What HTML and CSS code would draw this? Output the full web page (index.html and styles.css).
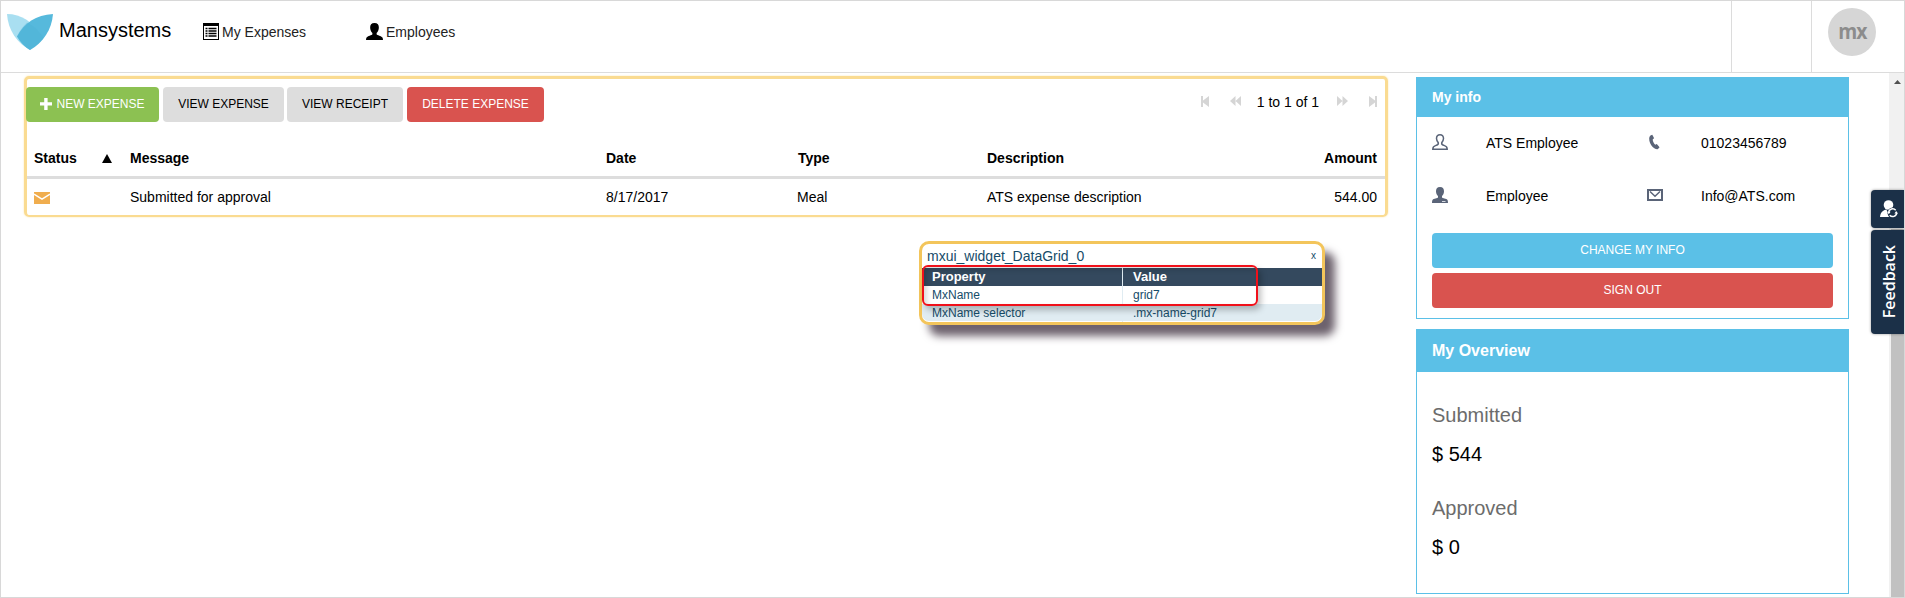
FILE: index.html
```html
<!DOCTYPE html>
<html lang="en">
<head>
<meta charset="utf-8">
<title>Mansystems</title>
<link rel="stylesheet" href="styles.css">
</head>
<body>
<div class="app">
  <header class="topbar">
    <svg class="logo" viewBox="0 0 46 36">
      <path fill="#a9dff1" d="M0 0C14 0 26 8 33 20L23 36C10 29 1 16 0 0z"/>
      <path fill="#56b9dc" d="M46 0C29 1 17 9 10 22.500C13 28 18 33 23 36C36 29 45 15 46 0z"/>
      <path fill="#49aed3" d="M20 8.500C27 12 33 18 36.500 24C32 30 28 33 23 36C18 33 13 28 10 22.500C12.500 17 16 12 20 8.500z" opacity=".3"/>
    </svg>
    <span class="brand">Mansystems</span>
    <a class="nav nav-expenses"><svg width="16" height="17" viewBox="0 0 16 17"><path fill="#000" fill-rule="evenodd" d="M0 0h16v17H0zM1 3v13h14V3z"/><path stroke="#000" stroke-width="1.500" d="M2.500 5.500h2M5.500 5.500h8M2.500 8h2M5.500 8h8M2.500 10.500h2M5.500 10.500h8M2.500 13h2M5.500 13h8"/></svg>My Expenses</a>
    <a class="nav"><svg width="17" height="17" viewBox="0 0 16 16" preserveAspectRatio="none"><path fill="#000" d="M8 0C5 0 3.800 1.800 3.900 4.500C4 6.500 4.800 8.300 6 9.300V10.600C5.600 11.600 1.500 12.300.700 13.500C.2 14.200 0 15 0 16H16C16 15 15.800 14.200 15.300 13.500C14.500 12.300 10.400 11.600 10 10.600V9.300C11.200 8.300 12 6.500 12.100 4.500C12.200 1.800 11 0 8 0z"/></svg>Employees</a>
    <div class="slot"></div>
    <div class="account"><span class="avatar"><span class="avatar-text">mx</span></span></div>
  </header>

  <div class="body">
    <main class="grid">
      <div class="toolbar">
        <button class="btn green"><svg width="12" height="12" viewBox="0 0 12 12"><path fill="#fff" d="M4.200 0h3.400v4.200H12v3.400H7.600V12H4.200V7.600H0V4.200h4.200z"/></svg>NEW EXPENSE</button>
        <button class="btn grey view">VIEW EXPENSE</button>
        <button class="btn grey receipt">VIEW RECEIPT</button>
        <button class="btn red delete">DELETE EXPENSE</button>
        <div class="pager">
          <svg class="first" width="8" height="11" viewBox="0 0 8 11"><path d="M0 0h2v4.500L8 0v11L2 6.500V11H0z"/></svg>
          <svg class="prev" width="11" height="10" viewBox="0 0 11 10"><path d="M5.500 0v10L0 5zM11 0v10L5.500 5z"/></svg>
          <span>1 to 1 of 1</span>
          <svg class="next" width="11" height="10" viewBox="0 0 11 10"><path d="M0 0v10l5.500-5zM5.500 0v10L11 5z"/></svg>
          <svg class="last" width="8" height="11" viewBox="0 0 8 11"><path d="M8 0H6v4.500L0 0v11l6-4.500V11h2z"/></svg>
        </div>
      </div>
      <div class="row head">
        <div class="status-head"><span>Status</span><svg width="10" height="9" viewBox="0 0 10 9"><path d="M5 0l5 9H0z"/></svg></div>
        <div>Message</div><div>Date</div><div class="type-head">Type</div><div>Description</div><div class="amount">Amount</div>
      </div>
      <div class="row">
        <div><svg class="mail" width="16" height="12" viewBox="0 0 16 12"><path fill="#f0ad4e" d="M0 0h16v12H0z"/><path d="M0 2.200l8 5 8-5" fill="none" stroke="#fff" stroke-width="1.400"/></svg></div>
        <div>Submitted for approval</div><div>8/17/2017</div><div>Meal</div><div>ATS expense description</div><div class="amount">544.00</div>
      </div>
    </main>

    <aside class="side">
      <section class="panel info">
        <h2>My info</h2>
        <div class="facts">
          <svg class="person" width="16" height="16" viewBox="0 0 16 16"><path fill="none" stroke="#5a6478" stroke-width="1.500" d="M8 .8C5.700.8 4.500 2.300 4.500 4.600C4.500 6.500 5.500 7.800 6.300 8.800C6.700 10.500 5.500 11 3.500 11.600C1.500 12.200.8 13 .8 15.200H15.200C15.200 13 14.500 12.200 12.500 11.600C10.500 11 9.300 10.500 9.700 8.800C10.500 7.800 11.500 6.500 11.500 4.600C11.500 2.300 10.300.8 8 .8z"/></svg>
          <span>ATS Employee</span>
          <svg class="phone" width="11" height="16" viewBox="0 0 12 16"><path fill="#5a6478" d="M3.600 0L5.600 4L4.100 5C4 7 5 9.300 6.800 11L8.500 10.300L11.500 13.800L9.800 15.600C8.500 16.200 6.500 15.700 4.300 13.800C1.500 11.200.1 7.500.2 4C.3 2 1.300.5 3.600 0z"/></svg>
          <span>01023456789</span>
          <svg class="person" width="16" height="16" viewBox="0 0 16 16"><path fill="#5a6478" d="M8 0C5 0 3.900 1.800 4 4.500C4.100 6.500 5 8 6 9V10.600C5.600 11.400 1.500 11.800.700 12.800C.2 13.500 0 14.500 0 16H16C16 14.500 15.800 13.500 15.300 12.800C14.500 11.800 10.400 11.400 10 10.600V9C11 8 11.900 6.500 12 4.500C12.100 1.800 11 0 8 0z"/><path stroke="#d5d9e0" d="M10 14.500h3.500"/></svg>
          <span>Employee</span>
          <svg class="envelope" width="16" height="12" viewBox="0 0 16 12"><path fill="none" stroke="#5a6478" stroke-width="2" d="M1 1h14v10H1z"/><path fill="none" stroke="#5a6478" stroke-width="1.500" d="M3 2.500l5 4.800 5-4.800"/></svg>
          <span>Info@ATS.com</span>
        </div>
        <button class="btn blue">CHANGE MY INFO</button>
        <button class="btn red">SIGN OUT</button>
      </section>
      <section class="panel overview">
        <h2>My Overview</h2>
        <dl><dt>Submitted</dt><dd>$ 544</dd><dt>Approved</dt><dd>$ 0</dd></dl>
      </section>
    </aside>

    <div class="scrollbar"><svg width="7" height="4" viewBox="0 0 7 4"><path fill="#505050" d="M3.500 0L7 4H0z"/></svg><div class="thumb"></div></div>
  </div>

  <div class="popup">
    <div class="popup-title"><span>mxui_widget_DataGrid_0</span><span class="close">x</span></div>
    <div class="prop prop-head"><span>Property</span><span>Value</span></div>
    <div class="prop"><span>MxName</span><span>grid7</span></div>
    <div class="prop alt"><span>MxName selector</span><span>.mx-name-grid7</span></div>
    <div class="highlight"></div>
  </div>

  <div class="feedback">
    <div class="tab switch"><svg width="18" height="18" viewBox="0 0 18 18"><circle cx="8.500" cy="5" r="4.800" fill="#fff"/><path fill="#fff" d="M0 17C.3 12.500 3 10 6.500 9.500L9 17z"/><circle cx="12.700" cy="12.700" r="5.200" fill="#1b3048"/><path fill="none" stroke="#fff" stroke-width="1.500" d="M8.700 12.500a4 4 0 0 1 7-2.300M16.700 12.900a4 4 0 0 1-7 2.300"/><path fill="#fff" d="M7 11.800h3.600l-1.800 2.500zM18 13.500h-3.600l1.800-2.500z"/></svg></div>
    <div class="tab label"><span>Feedback</span></div>
  </div>
</div>
</body>
</html>
```

FILE: styles.css
```css
* { box-sizing: border-box; }
body { margin: 0; background: #fff; color: #000; font: 14px/20px "Liberation Sans", Arial, sans-serif; }
svg { display: block; flex: none; }
.app { position: relative; width: 1905px; height: 598px; border: 1px solid #d8d8d8; overflow: hidden; display: flex; flex-direction: column; }

.topbar { display: flex; height: 72px; border-bottom: 1px solid #dcdcdc; flex: none; padding-left: 6px; }
.logo { width: 46px; height: 36px; margin-top: 13px; }
.brand { font-size: 20px; line-height: 24px; margin: 17px 0 0 6px; width: 144px; }
.nav { display: flex; align-items: flex-start; gap: 3px; margin-top: 22px; color: #222; line-height: 19px; }
.nav-expenses { width: 163px; }
.slot { margin-left: auto; width: 80px; border-left: 1px solid #dcdcdc; }
.account { width: 93px; border-left: 1px solid #dcdcdc; padding: 7px 0 0 16px; }
.avatar { display: flex; justify-content: center; width: 48px; height: 48px; border-radius: 50%; background: #d6d6d6; color: #8c8c8c; font: bold 21px/46px "Open Sans", sans-serif; }
.avatar-text { letter-spacing: -1px; transform: scaleX(.92); }

.body { display: flex; flex: 1; min-height: 0; }
.grid { width: 1364px; height: 141px; margin: 3px 0 0 23px; border: 3px solid #fadb91; border-bottom-width: 2px; border-radius: 5px; box-shadow: 0 0 2px #fbe3a9; }
.toolbar { display: flex; height: 67px; padding-top: 8px; margin-left: -1px; }
.btn { display: flex; align-items: center; justify-content: center; height: 35px; border: 0; border-radius: 4px; padding: 0 0 2px; font: 12px/16px "Liberation Sans", Arial, sans-serif; color: #fff; flex: none; }
.green { width: 133px; background: #8cc152; gap: 4px; }
.grey { background: #ddd; color: #000; }
.view { width: 121px; margin-left: 4px; }
.receipt { width: 116px; margin-left: 3px; }
.delete { width: 137px; margin-left: 4px; }
.red { background: #d9534f; }
.blue { background: #5bc0e7; }
.pager { display: flex; margin-left: auto; padding-right: 8px; fill: #d5d5d5; }
.pager svg { margin-top: 9px; }
.pager .first { margin-right: 21px; }
.pager .prev { margin-right: 16px; }
.pager .next { margin: 9px 21px 0 18px; }
.pager span { line-height: 30px; }

.row { display: grid; grid-template-columns: 96px 476px 191px 190px 1fr 80px; padding: 0 8px 0 7px; height: 36px; line-height: 36px; }
.head { height: 33px; font-weight: bold; border-bottom: 3px solid #ddd; line-height: 24px; }
.status-head { display: flex; }
.status-head span { width: 68px; }
.status-head svg { margin-top: 8px; }
.type-head { padding-left: 1px; }
.mail { margin-top: 13px; }
.amount { text-align: right; }

.side { width: 433px; margin: 4px 0 0 28px; }
.panel { border: 1px solid #5bc0e7; display: flex; flex-direction: column; }
.panel h2 { margin: 0; background: #5bc0e7; color: #fff; font-size: 14px; line-height: 20px; padding: 9px 15px 10px; }
.info { height: 242px; }
.facts { display: grid; grid-template-columns: 54px 161px 54px 1fr; grid-template-rows: 51px 55px; align-items: center; padding: 0 15px; height: 116px; flex: none; }
.facts .person { margin-bottom: 2px; }
.facts .phone { margin: 0 0 2px 2px; }
.facts .envelope { margin-bottom: 2px; }
.panel .btn { margin: 0 15px 5px; }
.overview { margin-top: 10px; height: 265px; }
.overview h2 { font-size: 16px; padding: 11px 15px 11px; }
.overview dl { margin: 0; padding: 31px 15px 0; font-size: 20px; line-height: 24px; }
.overview dt { color: #6c6c6c; }
.overview dd { margin: 15px 0 30px; }

.scrollbar { margin-left: auto; width: 15px; background: #f1f1f1; display: flex; flex-direction: column; }
.scrollbar svg { margin: 7px 0 0 5px; }
.thumb { flex: 1; background: #c1c1c1; margin: 145px 0 0 2px; }

.popup { position: absolute; left: 918px; top: 240px; width: 406px; height: 84px; border: 3px solid #f3c55b; border-radius: 10px; background: #fff; color: #164c69; box-shadow: 10px 11px 8px #6d626d; padding-top: 3px; }
.popup-title { display: flex; height: 21px; justify-content: space-between; padding: 0 6px 0 5px; line-height: 18px; }
.close { font-size: 10px; line-height: 18px; }
.prop { display: grid; grid-template-columns: 200px 1fr; height: 18px; font-size: 12px; line-height: 18px; }
.prop span { padding-left: 10px; }
.prop span + span { border-left: 1px solid #e0ecf2; }
.prop-head { background: #34495e; color: #fff; font-size: 13px; font-weight: bold; }
.alt { background: #e0ecf2; border-radius: 0 0 7px 7px; height: 17px; }
.highlight { position: absolute; left: 0; top: 21px; width: 336px; height: 41px; border: 2px solid #f0101a; border-radius: 6px; box-shadow: 3px 4px 6px rgba(0,0,0,.25), inset 3px 3px 5px rgba(0,0,0,.15); }

.feedback { position: absolute; right: 0; top: 189px; width: 33px; display: flex; flex-direction: column; gap: 2px; }
.tab { background: #1b3048; border-radius: 4px 0 0 4px; box-shadow: 0 0 3px rgba(0,0,0,.4); display: flex; align-items: center; justify-content: center; }
.switch { height: 38px; padding-left: 2px; }
.label { height: 104px; color: #fff; padding-left: 3px; }
.label span { writing-mode: vertical-rl; transform: rotate(180deg); font: 600 16px/20px "Open Sans", sans-serif; }
```
